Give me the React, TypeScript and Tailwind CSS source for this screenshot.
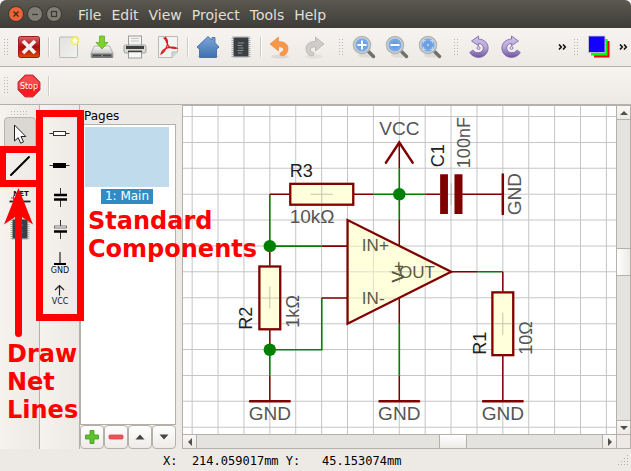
import type { ReactNode } from "react";

const DARK = "#800000";
const NET = "#008000";
const COLS = Array.from({ length: 17 }, (_, i) => 192.8 + 25.81 * i);
const ROWS = Array.from({ length: 13 }, (_, i) => 117.5 + 25.81 * i);

function Handle() {
  return (
    <div className="flex w-3 shrink-0 items-center justify-center" aria-hidden="true">
      <svg width="5" height="17" viewBox="0 0 5 17" fill="#b9b4ae">
        {[0, 3, 6, 9, 12, 15].map((y) => (
          <g key={y}>
            <rect x="0" y={y} width="1" height="1" />
            <rect x="3" y={y} width="1" height="1" />
          </g>
        ))}
      </svg>
    </div>
  );
}

function Sep() {
  return (
    <div className="flex w-[7px] shrink-0 items-center justify-center">
      <div className="h-5 w-px bg-[#cfcbc6]" />
      <div className="h-5 w-px bg-white" />
    </div>
  );
}

function Tool({ label, children }: { label: string; children: ReactNode }) {
  return (
    <button aria-label={label} className="flex w-[33px] shrink-0 items-center justify-center">
      <svg width="24" height="24" viewBox="0 0 24 24" fill="none">
        {children}
      </svg>
    </button>
  );
}

function More({ label }: { label: string }) {
  return (
    <button aria-label={label} className="flex w-4 shrink-0 items-center justify-center">
      <svg width="9" height="6" viewBox="0 0 9 6" fill="none" stroke="#111" strokeWidth="1.6">
        <path d="M1 .5 3.3 3 1 5.5M5 .5 7.3 3 5 5.5" />
      </svg>
    </button>
  );
}

function Lens() {
  return (
    <>
      <ellipse cx="14" cy="20.500" rx="8" ry="2" fill="#000" opacity=".07" />
      <path d="m16.500 16.500 5 5" stroke="#6f716c" strokeWidth="3.400" strokeLinecap="round" />
      <circle cx="10" cy="10" r="8.300" fill="url(#lens)" stroke="#b4b6b0" strokeWidth="2" />
      <circle cx="10" cy="10" r="7.200" stroke="#e4e6e2" strokeWidth=".8" />
    </>
  );
}

function Chip() {
  return (
    <>
      <rect x="3.500" y="2" width="17" height="20" stroke="#a3abb3" strokeWidth="2" strokeDasharray="1 1" />
      <rect x="4.500" y="2.500" width="15" height="19" rx="1" fill="#3a3f41" />
      <path d="M9 8h6M8.500 10.500h5M9.500 13h5M8.500 15.500h6M9 18h4" stroke="#8b9092" strokeWidth="1" />
    </>
  );
}

function Rotation() {
  return (
    <>
      <path
        d="M11.500 1v3c5.800.3 9.600 4 9.600 9 0 5.400-4.200 9.400-9.600 9.400-3.900 0-7-1.800-8.800-4.800l3.200-2.600c1.400 1.900 3 2.700 5.200 2.700 3 0 5.200-2 5.200-4.700 0-2.700-1.900-4.400-4.800-4.500v2.200L4.500 6z"
        fill="url(#purple)"
        stroke="#7560a6"
        strokeWidth=".8"
      />
      <circle cx="11.500" cy="13" r="1.500" fill="#e8e2f5" stroke="#8873b5" strokeWidth=".9" />
    </>
  );
}

function Defs() {
  return (
    <svg className="absolute size-0" aria-hidden="true">
      <defs>
        <linearGradient id="red" x1="0" y1="0" x2="0" y2="1">
          <stop offset="0" stopColor="#d86868" />
          <stop offset=".5" stopColor="#a80b0b" />
          <stop offset="1" stopColor="#e04a08" />
        </linearGradient>
        <radialGradient id="lens">
          <stop offset="0" stopColor="#5b90da" />
          <stop offset="1" stopColor="#8ab6ec" />
        </radialGradient>
        <linearGradient id="purple" x1="0" y1="0" x2="0" y2="1">
          <stop offset="0" stopColor="#cfc5e6" />
          <stop offset=".5" stopColor="#b8aad8" />
          <stop offset="1" stopColor="#73549f" />
        </linearGradient>
        <linearGradient id="blue" x1="0" y1="0" x2="0" y2="1">
          <stop offset="0" stopColor="#7ba6da" />
          <stop offset="1" stopColor="#3f70ae" />
        </linearGradient>
        <linearGradient id="metal" x1="0" y1="0" x2="0" y2="1">
          <stop offset="0" stopColor="#fafafa" />
          <stop offset="1" stopColor="#a9aba8" />
        </linearGradient>
        <linearGradient id="paper" x1="0" y1="0" x2="1" y2="1">
          <stop offset="0" stopColor="#dfe1dc" />
          <stop offset="1" stopColor="#f3f3f1" />
        </linearGradient>
      </defs>
    </svg>
  );
}

function TitleBar() {
  return (
    <header className="flex h-7 shrink-0 items-center rounded-t-md bg-linear-to-b from-[#5b5950] to-[#3d3c37] pl-2">
      <div className="flex gap-[3px]">
        <button aria-label="Close window" className="flex size-4 items-center justify-center rounded-full border border-[#38362f] bg-[#ea6437]">
          <svg width="8" height="8" viewBox="0 0 8 8" stroke="#40291d" strokeWidth="1.3">
            <path d="m1.500 1.500 5 5m0-5-5 5" />
          </svg>
        </button>
        <button aria-label="Minimise" className="flex size-4 items-center justify-center rounded-full border border-[#38362f] bg-[#807d73]">
          <svg width="8" height="8" viewBox="0 0 8 8" stroke="#3a3832" strokeWidth="1.2">
            <path d="M1 4.500h6" />
          </svg>
        </button>
        <button aria-label="Maximise" className="flex size-4 items-center justify-center rounded-full border border-[#38362f] bg-[#807d73]">
          <svg width="8" height="8" viewBox="0 0 8 8" fill="none" stroke="#3a3832" strokeWidth="1.200">
            <rect x="1.500" y="1.500" width="5" height="5" />
          </svg>
        </button>
      </div>
      <nav className="ml-4 flex gap-[10px] pt-px font-['DejaVu_Sans',sans-serif] text-sm text-[#e2dfd6]">
        {["File", "Edit", "View", "Project", "Tools", "Help"].map((m) => (
          <button key={m}>{m}</button>
        ))}
      </nav>
    </header>
  );
}

function MainToolbar() {
  return (
    <div className="flex h-[39px] shrink-0 border-b border-[#b5b0aa] bg-linear-to-b from-[#f6f3f0] to-[#edeae6]">
      <div className="flex w-[335px] shrink-0">
        <Handle />
        <Tool label="Close project">
          <rect x="1.500" y="1.500" width="21" height="21" rx="2" fill="url(#red)" stroke="#a01818" />
          <path d="m6 6 12 12M18 6 6 18" stroke="#f2f0f0" strokeWidth="3.800" />
        </Tool>
        <Sep />
        <Tool label="New">
          <rect x="2.500" y="2" width="18" height="20.500" rx="1" fill="url(#paper)" stroke="#b9bbb6" />
          <circle cx="18" cy="5.500" r="4.600" fill="#f3ee4a" opacity=".75" />
          <path d="m18 2 1 2.500 2.500.2-2 1.700.7 2.600-2.200-1.500L15.800 9l.7-2.600-2-1.700 2.500-.2z" fill="#fffff0" />
        </Tool>
        <Tool label="Save">
          <path d="M4.500 11h15l3.500 7v4.500H1V18z" fill="url(#metal)" stroke="#a2a4a1" strokeWidth=".8" />
          <path d="M1.500 18.500h21V23h-21z" fill="#777b7a" />
          <path d="M3 20.500h18" stroke="#44494a" strokeWidth="1.500" strokeDasharray="8 2" />
          <path d="M9.500 1h5v6.500H18L12 14 6 7.500h3.500z" fill="#7cd32c" stroke="#59a515" strokeWidth=".7" />
        </Tool>
        <Tool label="Print">
          <rect x="5.500" y="1" width="13" height="11" fill="#f2f3f2" stroke="#9a9c99" />
          <path d="M8 3.500h8M8 6h8" stroke="#c5c7c4" />
          <rect x="1" y="10" width="22" height="8" rx="1.500" fill="#d9dad7" stroke="#8d8f8c" strokeWidth=".8" />
          <path d="M3 12.500h18" stroke="#3c3e3d" strokeWidth="3" />
          <rect x="5.500" y="16" width="13" height="7" fill="#f7f7f6" stroke="#9a9c99" />
          <path d="M5 16.500h14" stroke="#404241" strokeWidth="1.500" />
        </Tool>
        <Tool label="Export PDF">
          <path d="M2.500 1.500h19V17L16 22.500H2.500z" fill="#f3f3f2" stroke="#b9b9b7" />
          <path d="M21.500 17H16v5.500" fill="#d8d8d6" stroke="#b8b8b6" />
          <path
            d="M7.500 3c3 0 2.500 5 5.200 8.200 2.400 2.600 6 2.300 8 2-2.500-1.400-5.800-1.300-8.600-.6-3 .9-6.500 3.200-7 6.400 3.500-1.500 5.400-6.600 6.200-9.400.7-2.600-.4-6.400-2.300-7.600"
            stroke="#d4201e"
            strokeWidth="1.300"
          />
        </Tool>
        <Sep />
        <Tool label="Home">
          <ellipse cx="12" cy="21.500" rx="11" ry="1.800" fill="#000" opacity=".08" />
          <path d="M12 1.500 16 5V2.500h3v5.200l4 4.300-1.500 1.500h-1V22.500H3.500v-9h-1L1 12z" fill="url(#blue)" stroke="#3a669f" strokeWidth=".8" />
        </Tool>
        <Tool label="Component library">
          <Chip />
        </Tool>
        <Sep />
        <Tool label="Undo">
          <ellipse cx="11" cy="21.500" rx="9" ry="2" fill="#000" opacity=".08" />
          <path
            d="M9.500 2v4.500c6.500 0 9.500 3 9.500 7.300 0 4.200-2.800 7-6 7-1.200 0-2-.8-2-1.800s.8-1.700 1.500-1.900c1.300-.3 2-1.300 2-2.700 0-1.800-1.500-2.600-5-2.600v4.200L1 9z"
            fill="#f8964a"
            stroke="#f0812c"
            strokeWidth=".6"
          />
        </Tool>
        <Tool label="Redo">
          <ellipse cx="12" cy="21.500" rx="9" ry="2" fill="#000" opacity=".05" />
          <path
            d="M13.500 2v4.500C7 6.500 4 9.500 4 13.800c0 4.200 2.800 7 6 7 1.200 0 2-.8 2-1.800s-.8-1.700-1.500-1.900c-1.300-.3-2-1.300-2-2.700 0-1.800 1.500-2.600 5-2.600V16L22 9z"
            fill="#cfcdca"
            stroke="#b5b2ae"
            strokeWidth=".8"
          />
        </Tool>
      </div>
      <div className="flex w-[115px] shrink-0">
        <Handle />
        <Tool label="Zoom in">
          <Lens />
          <path d="M10 5.500v9M5.500 10h9" stroke="#fff" strokeWidth="2" />
        </Tool>
        <Tool label="Zoom out">
          <Lens />
          <path d="M5.500 10h9" stroke="#fff" strokeWidth="2" />
        </Tool>
        <Tool label="Zoom to fit">
          <Lens />
          <path d="M5.500 8V5.500H8M12 5.500h2.500V8M14.500 12v2.500H12M8 14.500H5.500V12M8.500 10h3M10 8.500v3" stroke="#b9d4f7" strokeWidth="1.200" />
        </Tool>
      </div>
      <div className="flex min-w-0 flex-1">
        <Handle />
        <Tool label="Rotate left">
          <Rotation />
        </Tool>
        <Tool label="Rotate right">
          <g transform="matrix(-1 0 0 1 23 0)">
            <Rotation />
          </g>
        </Tool>
        <div className="flex-1" />
        <More label="More rotate tools" />
      </div>
      <div className="flex shrink-0">
        <Handle />
        <Tool label="Layers">
          <path d="M7 6h15.500v16.500H7z" fill="#f00" />
          <path d="M4 4h16.500v16.500H4z" fill="#0f0" />
          <path d="M1.500 1h16.500v16.500H1.500z" fill="#1400ff" stroke="#cfcfcf" strokeWidth=".8" />
        </Tool>
        <More label="More layer tools" />
      </div>
    </div>
  );
}

function StopToolbar() {
  return (
    <div className="flex h-[38px] shrink-0 border-b border-[#b5b0aa] bg-linear-to-b from-[#f6f3f0] to-[#edeae6]">
      <Handle />
      <Tool label="Stop">
        <path d="M8 1h8l7 7v8l-7 7H8l-7-7V8z" fill="#fb1b20" stroke="#b5484a" />
        <path d="M8.300 2h7.400L22 8.300V11C15 10 8 12 2 15V8.300z" fill="#fff" opacity=".2" />
        <text x="12" y="15" textAnchor="middle" fontSize="8" fill="#fff" className="font-['DejaVu_Sans',sans-serif]">
          Stop
        </text>
      </Tool>
      <Sep />
    </div>
  );
}

function SideTool({ label, active, children }: { label: string; active?: boolean; children: ReactNode }) {
  return (
    <button
      aria-label={label}
      className={
        active
          ? "flex h-8 w-8 items-center justify-center rounded-sm border border-[#b9b4ae] bg-[#dbd7d3]"
          : "flex h-8 w-8 items-center justify-center"
      }
    >
      <svg width="24" height="24" viewBox="0 0 24 24" fill="none">
        {children}
      </svg>
    </button>
  );
}

function SideBars() {
  const small = "font-['DejaVu_Sans',sans-serif]";
  return (
    <>
      <div className="flex w-10 shrink-0 flex-col items-center border-r border-[#b5b0aa] bg-linear-to-r from-[#f6f3ef] to-[#edeae6] pt-1.5">
        <svg width="17" height="5" viewBox="0 0 17 5" fill="#b9b4ae" className="mb-px">
          {[0, 3, 6, 9, 12, 15].map((x) => (
            <g key={x}>
              <rect x={x} y="0" width="1" height="1" />
              <rect x={x} y="3" width="1" height="1" />
            </g>
          ))}
        </svg>
        <SideTool label="Select" active>
          <path d="M6.500 4v16l3.700-3.300 2.500 5.500 2.800-1.300-2.500-5.400h4.800z" fill="#fff" stroke="#222" />
        </SideTool>
        <SideTool label="Draw net line">
          <path d="M3 22 21 4" stroke="#000" strokeWidth="2" strokeLinecap="round" />
        </SideTool>
        <SideTool label="Add net label">
          <text x="13" y="11" textAnchor="middle" fontSize="7" fontWeight="700" fill="#111" className={small}>
            NET
          </text>
          <path d="M1.500 16.500h21" stroke="#222" strokeWidth="1.800" />
          <path d="M3 13h5M5.500 10.500v5" stroke="#e22" />
        </SideTool>
        <SideTool label="Add component">
          <Chip />
        </SideTool>
      </div>
      <div className="flex w-10 shrink-0 flex-col items-center border-r border-[#b5b0aa] bg-linear-to-r from-[#f6f3ef] to-[#edeae6] pt-3">
        <SideTool label="Resistor">
          <path d="M1.500 12.500h20" stroke="#333" />
          <rect x="5.500" y="10.500" width="12" height="4" fill="#fff" stroke="#333" />
        </SideTool>
        <SideTool label="Filled resistor">
          <path d="M1.500 12.500h20" stroke="#333" />
          <rect x="5" y="10" width="13" height="5" fill="#000" />
        </SideTool>
        <SideTool label="Capacitor">
          <path d="M12.500 3v6M12.500 15v7" stroke="#333" />
          <path d="M6 10h13M6 14.500h13" stroke="#000" strokeWidth="2.500" />
        </SideTool>
        <SideTool label="Polarised capacitor">
          <path d="M12.500 3v6M12.500 15v7" stroke="#333" />
          <rect x="6.500" y="9" width="12" height="2" fill="#fff" stroke="#555" strokeWidth=".8" />
          <path d="M6 14.500h13" stroke="#000" strokeWidth="2.500" />
        </SideTool>
        <SideTool label="Ground">
          <path d="M12 3v12" stroke="#222" strokeWidth="1.200" />
          <path d="M6 15h12" stroke="#000" strokeWidth="2" />
          <text x="12" y="23.500" textAnchor="middle" fontSize="8" fill="#111" className={small}>
            GND
          </text>
        </SideTool>
        <SideTool label="Supply voltage">
          <path d="M11.500 14.500V4.500M7 9l4.500-4.500L16 9" stroke="#222" strokeWidth="1.200" />
          <text x="12" y="23" textAnchor="middle" fontSize="8" fill="#111" className={small}>
            VCC
          </text>
        </SideTool>
      </div>
    </>
  );
}

function PageButton({ label, children }: { label: string; children: ReactNode }) {
  return (
    <button
      aria-label={label}
      className="flex h-6 flex-1 items-center justify-center rounded-sm border border-[#b5b0aa] bg-linear-to-b from-white to-[#eeebe8]"
    >
      <svg width="16" height="16" viewBox="0 0 16 16">
        {children}
      </svg>
    </button>
  );
}

function PagesDock() {
  return (
    <aside className="flex w-24 shrink-0 flex-col font-['DejaVu_Sans',sans-serif] text-xs text-black">
      <h2 className="pt-[3px] pl-1 leading-4">Pages</h2>
      <ul className="flex-1 border border-[#b5b0aa] bg-white p-0.5">
        <li className="flex w-[86px] flex-col items-center gap-0.5 pl-0.5">
          <div className="h-[60px] w-full bg-[#c0dbec]" />
          <span className="bg-[#308cc6] px-1 leading-[15px] text-white">1: Main</span>
        </li>
      </ul>
      <div className="flex">
        <PageButton label="Add page">
          <path d="M6 1.500h4V6h4.500v4H10v4.500H6V10H1.500V6H6z" fill="#5cc32a" stroke="#3f9a1a" strokeWidth=".8" />
        </PageButton>
        <PageButton label="Remove page">
          <rect x="1" y="6" width="14" height="4" rx="1" fill="#ee5558" stroke="#d94346" strokeWidth=".8" />
        </PageButton>
        <PageButton label="Move page up">
          <path d="m8 5.500 4.500 5h-9z" fill="#444" />
        </PageButton>
        <PageButton label="Move page down">
          <path d="m8 10.500 4.500-5h-9z" fill="#444" />
        </PageButton>
      </div>
    </aside>
  );
}

function Vertical({ x, y, size, fill, children }: { x: number; y: number; size: number; fill: string; children: string }) {
  return (
    <text transform={`translate(${x} ${y}) rotate(-90)`} fontSize={size} fill={fill}>
      {children}
    </text>
  );
}

function Schematic() {
  return (
    <svg
      viewBox="183 107 433 327"
      preserveAspectRatio="xMidYMid slice"
      className="absolute inset-0 size-full bg-white font-['Liberation_Sans',Arial,sans-serif]"
      role="img"
      aria-label="Op-amp schematic"
    >
      <g stroke="#a0a0a4" strokeWidth="1" opacity=".6">
        {COLS.map((x) => (
          <path key={x} d={`M${x} 107V434`} />
        ))}
        {ROWS.map((y) => (
          <path key={y} d={`M183 ${y}H616`} />
        ))}
      </g>
      <g fill="none" stroke={NET} strokeWidth="1.6">
        <path d="M373.700 195H425.300M399.300 169V220.700M270.200 195V246.700H322M322 298.300V350H270.200V375.700M399.300 324V375.700M476.700 272.300H502.500" />
      </g>
      <g fill="none" stroke={DARK} strokeWidth="1.500">
        <path d="M270.200 195H290M354 195H373.700M425.300 195H440M462 195H502.500M399.300 143.500V169M399.300 220.700V247M399.300 298V324M399.300 375.700V401.300" />
        <path d="M270.200 246.700V266M270.200 330V350M270.200 375.700V401.300M322 246.700H347.700M322 298.300H347.700M451 272.300H476.700M502.500 272.300V292M502.500 356V401.300" />
      </g>
      <g stroke={DARK} strokeWidth="2.300" fill="#ffffdc" strokeLinejoin="miter">
        <rect x="290.600" y="184.600" width="62.800" height="20.800" />
        <rect x="259.800" y="267" width="20.800" height="62.600" />
        <rect x="492.100" y="292.800" width="20.800" height="62.600" />
        <path d="M347.700 220.700V324L451 272.300z" />
      </g>
      <g stroke="#808080" strokeWidth="1" opacity=".45">
        <path d="M311 195H333M322 185.500V204.500M270.200 287V309M261 298.300H279.500M502.500 313V335M493 324H512M451 184V206M389 272.300H410M399.300 262V283" />
        <path d="M373.500 235V310M348.500 246.700H396M348.500 272.300H446M348.500 298.300H396M425.200 261V284" opacity=".5" />
      </g>
      <g fill="none" stroke={DARK} strokeWidth="2.500" strokeLinecap="round">
        <path d="M386 163.500 399.300 143.500 412.600 163.500M250.500 401.300H290M379.600 401.300H419M482.800 401.300H522.200M502.500 175.300V214.700" />
      </g>
      <path d="M440 175h7.800v39.700H440zM454.300 175h8v39.700h-8z" fill={DARK} />
      <g fill={NET}>
        <circle cx="270.200" cy="246.700" r="6.200" />
        <circle cx="270.200" cy="350" r="6.200" />
        <circle cx="399.300" cy="195" r="6.200" />
      </g>
      <g fontSize="19" fill="#555555">
        <text x="399.300" y="136" textAnchor="middle">VCC</text>
        <text x="290" y="224">10kΩ</text>
        <text x="270.200" y="420" textAnchor="middle">GND</text>
        <text x="399.300" y="420" textAnchor="middle">GND</text>
        <text x="502.500" y="420" textAnchor="middle">GND</text>
      </g>
      <Vertical x={521} y={216} size={19} fill="#555555">GND</Vertical>
      <Vertical x={470} y={169} size={18} fill="#555555">100nF</Vertical>
      <Vertical x={299} y={328} size={18} fill="#555555">1kΩ</Vertical>
      <Vertical x={532} y={355} size={18} fill="#555555">10Ω</Vertical>
      <text x="290" y="178" fontSize="18" fill="#222222">R3</text>
      <Vertical x={443.500} y={168} size={18} fill="#222222">C1</Vertical>
      <Vertical x={252.500} y={330} size={18} fill="#222222">R2</Vertical>
      <Vertical x={485.500} y={355} size={18} fill="#222222">R1</Vertical>
      <g fontSize="17" fill="#5a5a42">
        <text x="362" y="252">IN+</text>
        <text x="362" y="304">IN-</text>
        <text x="399" y="278">OUT</text>
      </g>
      <Vertical x={404} y={283} size={17} fill="#5a5a42">V+</Vertical>
      <Vertical x={404} y={283} size={17} fill="#5a5a42">V-</Vertical>
    </svg>
  );
}

const ARROW_BUTTON = "flex shrink-0 items-center justify-center bg-linear-to-b from-[#f9f7f5] to-[#edeae6]";

function Arrow({ d }: { d: string }) {
  return (
    <svg width="8" height="8" viewBox="0 0 8 8" fill="#50504c">
      <path d={d} />
    </svg>
  );
}

function Canvas() {
  return (
    <main className="ml-1.5 grid min-w-0 flex-1 grid-cols-[1fr_15px] grid-rows-[1fr_15px] border-t border-l border-[#b5b0aa]">
      <div className="relative overflow-hidden">
        <Schematic />
      </div>
      <div className="flex flex-col border-x border-[#b5b0aa] bg-[#e4e3df]">
        <button aria-label="Scroll up" className={`${ARROW_BUTTON} h-3.5 border-b border-[#b5b0aa]`}>
          <Arrow d="m4 2 4 4H0z" />
        </button>
        <div className="grow-[128]" />
        <div className="h-7 border-y border-[#b5b0aa] bg-linear-to-r from-white to-[#edeae6]" />
        <div className="grow-[143]" />
        <button aria-label="Scroll down" className={`${ARROW_BUTTON} h-3.5 border-t border-[#b5b0aa]`}>
          <Arrow d="m4 6 4-4H0z" />
        </button>
      </div>
      <div className="flex border-y border-[#b5b0aa] bg-[#e4e3df]">
        <button aria-label="Scroll left" className={`${ARROW_BUTTON} w-3.5 border-r border-[#b5b0aa]`}>
          <Arrow d="m2 4 4-4v8z" />
        </button>
        <div className="grow-[243]" />
        <div className="w-7 border-x border-[#b5b0aa] bg-linear-to-b from-white to-[#edeae6]" />
        <div className="grow-[135]" />
        <button aria-label="Scroll right" className={`${ARROW_BUTTON} w-3.5 border-l border-[#b5b0aa]`}>
          <Arrow d="M6 4 2 0v8z" />
        </button>
      </div>
      <div className="border border-[#b5b0aa] bg-[#edeae6]" />
    </main>
  );
}

function StatusBar() {
  return (
    <footer className="flex h-[22px] shrink-0 items-center justify-between pt-0.5 pl-[163px] font-['DejaVu_Sans_Mono',monospace] text-xs text-black">
      <output className="whitespace-pre">{"X:  214.059017mm Y:   45.153074mm"}</output>
      <svg width="14" height="14" viewBox="0 0 14 14" fill="#b5b0aa">
        {[0, 1, 2, 3].map((r) =>
          Array.from({ length: r + 1 }, (_, c) => <rect key={`${r}-${c}`} x={10 - c * 3} y={1 + r * 3} width="1" height="1" />),
        )}
      </svg>
    </footer>
  );
}

function Annotations() {
  return (
    <div className="pointer-events-none absolute inset-0 overflow-hidden font-['DejaVu_Sans',sans-serif] text-2xl leading-7 font-bold text-[#ff0000]">
      <div className="absolute top-[110px] left-9 h-[211px] w-12 border-[7px] border-[#ff0000]" />
      <div className="absolute top-[146px] -left-px h-[41px] w-11 border-[7px] border-[#ff0000]" />
      <svg className="absolute top-[188px] left-1" width="30" height="150" viewBox="0 0 30 150" fill="#ff0000">
        <path d="M14.500 0 29 36.500l-11-7.500V145.500a3.500 3.500 0 0 1-7 0V29L0 36.500z" />
      </svg>
      <p className="absolute top-[207px] left-[88px]">
        Standard
        <br />
        Components
      </p>
      <p className="absolute top-[340px] left-[7px]">
        Draw
        <br />
        Net
        <br />
        Lines
      </p>
    </div>
  );
}

export default function App() {
  return (
    <div className="bg-white">
      <div className="relative flex h-screen flex-col rounded-t-md bg-[#edeae6]">
        <Defs />
        <TitleBar />
        <MainToolbar />
        <StopToolbar />
        <div className="flex min-h-0 flex-1">
          <SideBars />
          <PagesDock />
          <Canvas />
        </div>
        <StatusBar />
        <Annotations />
      </div>
    </div>
  );
}
